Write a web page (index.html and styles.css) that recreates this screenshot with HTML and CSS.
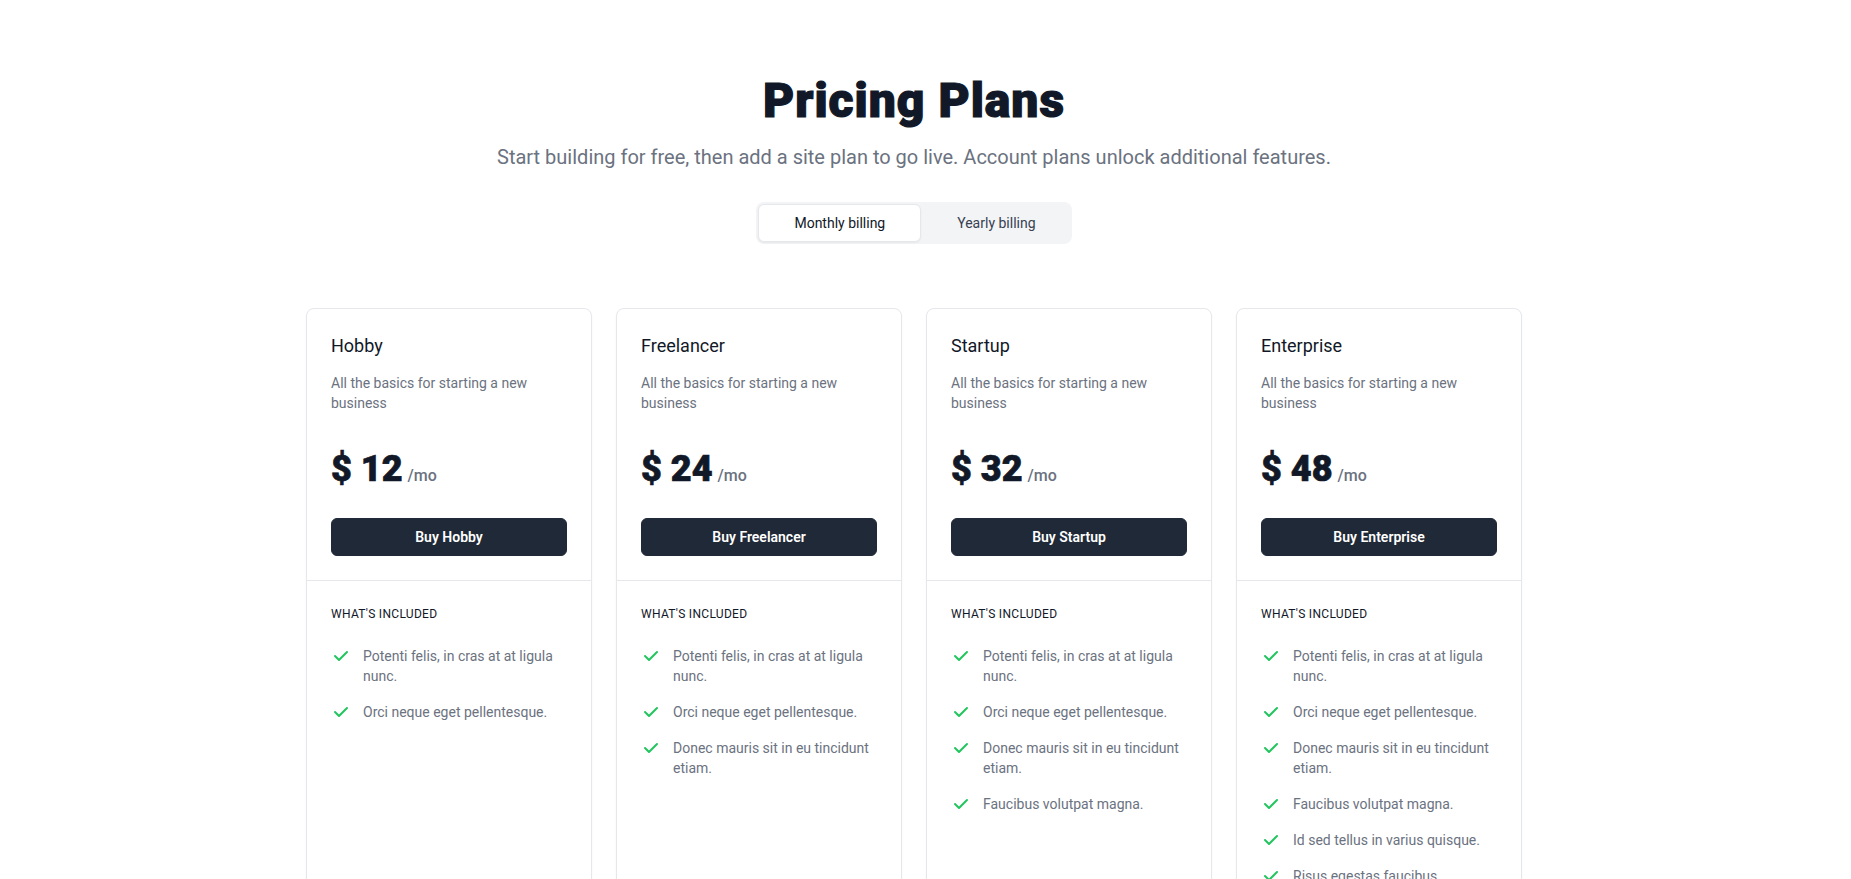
FILE: index.html
```html
<!DOCTYPE html>
<html lang="en">
<head>
<meta charset="utf-8">
<title>Pricing Plans</title>
<link rel="stylesheet" href="styles.css">
</head>
<body>
<div class="page">
  <div class="container">
    <div class="header">
      <h1 class="title">Pricing Plans</h1>
      <p class="subtitle">Start building for free, then add a site plan to go live. Account plans unlock additional features.</p>
      <div class="toggle">
        <button type="button" class="toggle-btn active">Monthly billing</button>
        <button type="button" class="toggle-btn">Yearly billing</button>
      </div>
    </div>

    <div class="plans">
      <div class="card">
        <div class="card-top">
          <h2 class="plan-name">Hobby</h2>
          <p class="plan-desc">All the basics for starting a new business</p>
          <p class="plan-price"><span class="amount">$ 12</span><span class="per">/mo</span></p>
          <a href="#" class="buy">Buy Hobby</a>
        </div>
        <div class="card-bottom">
          <h3 class="included">What's included</h3>
          <ul class="features">
            <li><svg class="check" viewBox="0 0 20 20" fill="currentColor"><path fill-rule="evenodd" d="M16.707 5.293a1 1 0 010 1.414l-8 8a1 1 0 01-1.414 0l-4-4a1 1 0 011.414-1.414L8 12.586l7.293-7.293a1 1 0 011.414 0z" clip-rule="evenodd"/></svg><span>Potenti felis, in cras at at ligula nunc.</span></li>
            <li><svg class="check" viewBox="0 0 20 20" fill="currentColor"><path fill-rule="evenodd" d="M16.707 5.293a1 1 0 010 1.414l-8 8a1 1 0 01-1.414 0l-4-4a1 1 0 011.414-1.414L8 12.586l7.293-7.293a1 1 0 011.414 0z" clip-rule="evenodd"/></svg><span>Orci neque eget pellentesque.</span></li>
          </ul>
        </div>
      </div>

      <div class="card">
        <div class="card-top">
          <h2 class="plan-name">Freelancer</h2>
          <p class="plan-desc">All the basics for starting a new business</p>
          <p class="plan-price"><span class="amount">$ 24</span><span class="per">/mo</span></p>
          <a href="#" class="buy">Buy Freelancer</a>
        </div>
        <div class="card-bottom">
          <h3 class="included">What's included</h3>
          <ul class="features">
            <li><svg class="check" viewBox="0 0 20 20" fill="currentColor"><path fill-rule="evenodd" d="M16.707 5.293a1 1 0 010 1.414l-8 8a1 1 0 01-1.414 0l-4-4a1 1 0 011.414-1.414L8 12.586l7.293-7.293a1 1 0 011.414 0z" clip-rule="evenodd"/></svg><span>Potenti felis, in cras at at ligula nunc.</span></li>
            <li><svg class="check" viewBox="0 0 20 20" fill="currentColor"><path fill-rule="evenodd" d="M16.707 5.293a1 1 0 010 1.414l-8 8a1 1 0 01-1.414 0l-4-4a1 1 0 011.414-1.414L8 12.586l7.293-7.293a1 1 0 011.414 0z" clip-rule="evenodd"/></svg><span>Orci neque eget pellentesque.</span></li>
            <li><svg class="check" viewBox="0 0 20 20" fill="currentColor"><path fill-rule="evenodd" d="M16.707 5.293a1 1 0 010 1.414l-8 8a1 1 0 01-1.414 0l-4-4a1 1 0 011.414-1.414L8 12.586l7.293-7.293a1 1 0 011.414 0z" clip-rule="evenodd"/></svg><span>Donec mauris sit in eu tincidunt etiam.</span></li>
          </ul>
        </div>
      </div>

      <div class="card">
        <div class="card-top">
          <h2 class="plan-name">Startup</h2>
          <p class="plan-desc">All the basics for starting a new business</p>
          <p class="plan-price"><span class="amount">$ 32</span><span class="per">/mo</span></p>
          <a href="#" class="buy">Buy Startup</a>
        </div>
        <div class="card-bottom">
          <h3 class="included">What's included</h3>
          <ul class="features">
            <li><svg class="check" viewBox="0 0 20 20" fill="currentColor"><path fill-rule="evenodd" d="M16.707 5.293a1 1 0 010 1.414l-8 8a1 1 0 01-1.414 0l-4-4a1 1 0 011.414-1.414L8 12.586l7.293-7.293a1 1 0 011.414 0z" clip-rule="evenodd"/></svg><span>Potenti felis, in cras at at ligula nunc.</span></li>
            <li><svg class="check" viewBox="0 0 20 20" fill="currentColor"><path fill-rule="evenodd" d="M16.707 5.293a1 1 0 010 1.414l-8 8a1 1 0 01-1.414 0l-4-4a1 1 0 011.414-1.414L8 12.586l7.293-7.293a1 1 0 011.414 0z" clip-rule="evenodd"/></svg><span>Orci neque eget pellentesque.</span></li>
            <li><svg class="check" viewBox="0 0 20 20" fill="currentColor"><path fill-rule="evenodd" d="M16.707 5.293a1 1 0 010 1.414l-8 8a1 1 0 01-1.414 0l-4-4a1 1 0 011.414-1.414L8 12.586l7.293-7.293a1 1 0 011.414 0z" clip-rule="evenodd"/></svg><span>Donec mauris sit in eu tincidunt etiam.</span></li>
            <li><svg class="check" viewBox="0 0 20 20" fill="currentColor"><path fill-rule="evenodd" d="M16.707 5.293a1 1 0 010 1.414l-8 8a1 1 0 01-1.414 0l-4-4a1 1 0 011.414-1.414L8 12.586l7.293-7.293a1 1 0 011.414 0z" clip-rule="evenodd"/></svg><span>Faucibus volutpat magna.</span></li>
          </ul>
        </div>
      </div>

      <div class="card">
        <div class="card-top">
          <h2 class="plan-name">Enterprise</h2>
          <p class="plan-desc">All the basics for starting a new business</p>
          <p class="plan-price"><span class="amount">$ 48</span><span class="per">/mo</span></p>
          <a href="#" class="buy">Buy Enterprise</a>
        </div>
        <div class="card-bottom">
          <h3 class="included">What's included</h3>
          <ul class="features">
            <li><svg class="check" viewBox="0 0 20 20" fill="currentColor"><path fill-rule="evenodd" d="M16.707 5.293a1 1 0 010 1.414l-8 8a1 1 0 01-1.414 0l-4-4a1 1 0 011.414-1.414L8 12.586l7.293-7.293a1 1 0 011.414 0z" clip-rule="evenodd"/></svg><span>Potenti felis, in cras at at ligula nunc.</span></li>
            <li><svg class="check" viewBox="0 0 20 20" fill="currentColor"><path fill-rule="evenodd" d="M16.707 5.293a1 1 0 010 1.414l-8 8a1 1 0 01-1.414 0l-4-4a1 1 0 011.414-1.414L8 12.586l7.293-7.293a1 1 0 011.414 0z" clip-rule="evenodd"/></svg><span>Orci neque eget pellentesque.</span></li>
            <li><svg class="check" viewBox="0 0 20 20" fill="currentColor"><path fill-rule="evenodd" d="M16.707 5.293a1 1 0 010 1.414l-8 8a1 1 0 01-1.414 0l-4-4a1 1 0 011.414-1.414L8 12.586l7.293-7.293a1 1 0 011.414 0z" clip-rule="evenodd"/></svg><span>Donec mauris sit in eu tincidunt etiam.</span></li>
            <li><svg class="check" viewBox="0 0 20 20" fill="currentColor"><path fill-rule="evenodd" d="M16.707 5.293a1 1 0 010 1.414l-8 8a1 1 0 01-1.414 0l-4-4a1 1 0 011.414-1.414L8 12.586l7.293-7.293a1 1 0 011.414 0z" clip-rule="evenodd"/></svg><span>Faucibus volutpat magna.</span></li>
            <li><svg class="check" viewBox="0 0 20 20" fill="currentColor"><path fill-rule="evenodd" d="M16.707 5.293a1 1 0 010 1.414l-8 8a1 1 0 01-1.414 0l-4-4a1 1 0 011.414-1.414L8 12.586l7.293-7.293a1 1 0 011.414 0z" clip-rule="evenodd"/></svg><span>Id sed tellus in varius quisque.</span></li>
            <li><svg class="check" viewBox="0 0 20 20" fill="currentColor"><path fill-rule="evenodd" d="M16.707 5.293a1 1 0 010 1.414l-8 8a1 1 0 01-1.414 0l-4-4a1 1 0 011.414-1.414L8 12.586l7.293-7.293a1 1 0 011.414 0z" clip-rule="evenodd"/></svg><span>Risus egestas faucibus.</span></li>
            <li><svg class="check" viewBox="0 0 20 20" fill="currentColor"><path fill-rule="evenodd" d="M16.707 5.293a1 1 0 010 1.414l-8 8a1 1 0 01-1.414 0l-4-4a1 1 0 011.414-1.414L8 12.586l7.293-7.293a1 1 0 011.414 0z" clip-rule="evenodd"/></svg><span>Risus cursus ullamcorper.</span></li>
          </ul>
        </div>
      </div>
    </div>
  </div>
</div>
</body>
</html>
```

FILE: styles.css
```css
* {
  box-sizing: border-box;
}

html, body {
  margin: 0;
  padding: 0;
  background: #ffffff;
}

body {
  font-family: Roboto, "Noto Sans", "Liberation Sans", sans-serif;
  color: #111827;
  line-height: 1.5;
  -webkit-font-smoothing: antialiased;
}

.page {
  width: 1828px;
}

.container {
  max-width: 1280px;
  margin: 0 auto;
  padding: 77px 32px 96px;
}

.header {
  display: flex;
  flex-direction: column;
  align-items: center;
}

.title {
  margin: 0;
  font-size: 48px;
  line-height: 48px;
  font-weight: 900;
  letter-spacing: 1px;
  -webkit-text-stroke: 1.2px #111827;
  color: #111827;
  text-align: center;
}

.subtitle {
  margin: 18px 0 0;
  font-size: 20px;
  line-height: 28px;
  color: #6b7280;
  text-align: center;
}

.toggle {
  display: flex;
  margin-top: 31px;
  padding: 2px;
  background: #f3f4f6;
  border-radius: 8px;
}

.toggle-btn {
  font-family: inherit;
  font-size: 14px;
  line-height: 20px;
  font-weight: 400;
  color: #374151;
  padding: 8px 33px;
  background: transparent;
  border: 1px solid transparent;
  border-radius: 6px;
  white-space: nowrap;
  margin: 0 0 0 2px;
  cursor: pointer;
}

.toggle-btn.active {
  margin-left: 0;
  padding: 8px 35px;
  background: #ffffff;
  border-color: #e5e7eb;
  color: #111827;
  box-shadow: 0 1px 2px 0 rgba(0, 0, 0, 0.05);
}

.plans {
  margin-top: 64px;
  display: grid;
  grid-template-columns: repeat(4, 1fr);
  gap: 24px;
}

.card {
  border: 1px solid #e5e7eb;
  border-radius: 8px;
  box-shadow: 0 1px 2px 0 rgba(0, 0, 0, 0.05);
}

.card-top {
  padding: 24px;
}

.plan-name {
  margin: 0;
  padding-top: 1px;
  font-size: 18px;
  line-height: 24px;
  font-weight: 400;
  color: #111827;
}

.plan-desc {
  margin: 14px 0 0;
  padding-top: 1px;
  font-size: 14px;
  line-height: 20px;
  color: #6b7280;
}

.plan-price {
  margin: 32px 0 0;
  padding-top: 4px;
  height: 41px;
  display: flex;
  align-items: baseline;
  gap: 5px;
}

.amount {
  font-size: 36px;
  line-height: 40px;
  font-weight: 900;
  -webkit-text-stroke: 0.7px #111827;
  color: #111827;
}

.per {
  font-size: 16px;
  line-height: 24px;
  font-weight: 500;
  color: #6b7280;
}

.buy {
  display: block;
  margin-top: 32px;
  background: #1f2937;
  border: 1px solid #1f2937;
  border-radius: 6px;
  padding: 8px 0;
  font-size: 14px;
  line-height: 20px;
  font-weight: 600;
  color: #ffffff;
  text-align: center;
  text-decoration: none;
}

.card-bottom {
  border-top: 1px solid #e5e7eb;
  padding: 25px 24px 32px;
}

.included {
  margin: 0;
  font-size: 12px;
  line-height: 16px;
  font-weight: 400;
  letter-spacing: 0.025em;
  text-transform: uppercase;
  color: #111827;
}

.features {
  list-style: none;
  margin: 24px 0 0;
  padding: 0;
  display: flex;
  flex-direction: column;
  gap: 16px;
}

.features li {
  display: flex;
  gap: 12px;
}

.check {
  flex-shrink: 0;
  width: 20px;
  height: 20px;
  color: #22c55e;
}

.features span {
  font-size: 14px;
  line-height: 20px;
  color: #6b7280;
}
```
